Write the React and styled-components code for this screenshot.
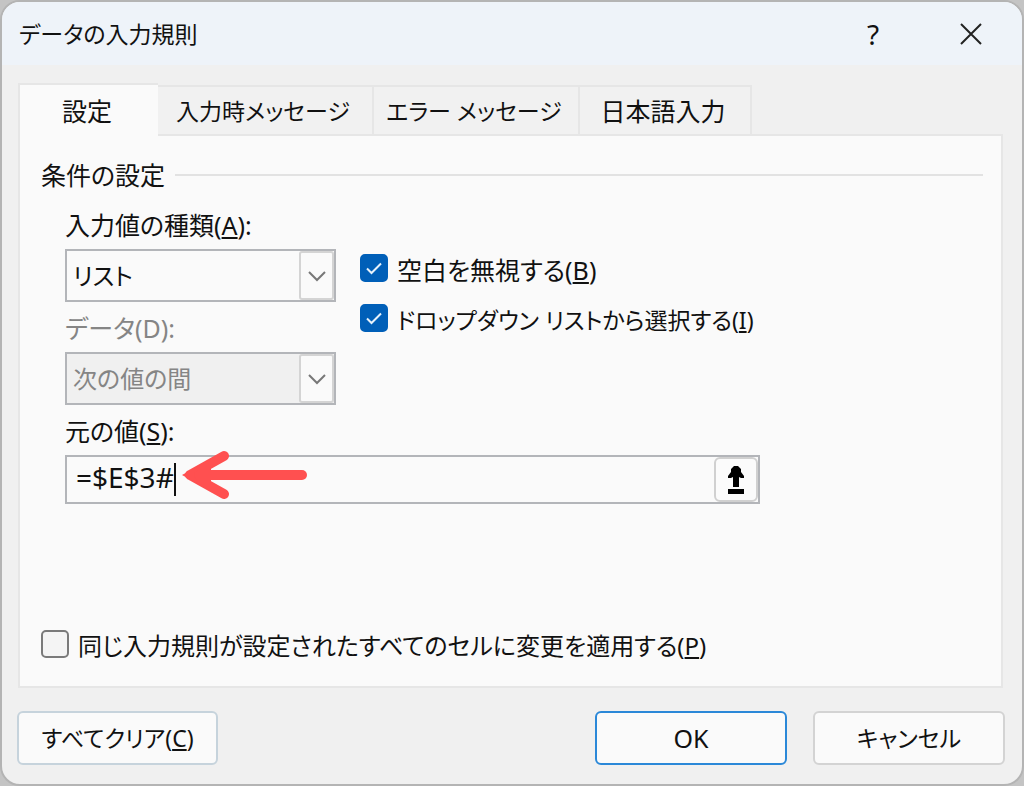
import {useState} from "react";
import styled, {createGlobalStyle} from "styled-components";

const GlobalStyle = createGlobalStyle`
    * {
        box-sizing: border-box;
    }

    body {
        margin: 0;
        background: #c4c4c4;
    }

    body, button, input, select {
        color: #111;
        font-family: "Noto Sans", "Noto Sans CJK JP", sans-serif;
        font-size: 25px;
        line-height: 34px;
        font-feature-settings: "palt";
    }
`

const Dialog = styled.main`
    display: flex;
    flex-direction: column;
    min-height: 100vh;
    border: 2px solid #b4b4b4;
    border-radius: 20px;
    background: #f0f0f0;
    overflow: hidden;
`

const TitleBar = styled.header`
    display: flex;
    align-items: center;
    height: 63px;
    padding: 0 20px 0 17px;
    background: #eef3f9;

    h1 {
        flex: 1;
        margin: 0;
        font-size: 23px;
        font-weight: 400;
    }
`

const TitleButton = styled.button`
    display: flex;
    align-items: center;
    justify-content: center;
    width: 62px;
    height: 44px;
    margin-left: 36px;
    padding: 0;
    border: 0;
    background: transparent;
    font-size: 28px;
`

const TabList = styled.div`
    display: flex;
    align-items: flex-end;
    margin: 18px 18px 0 16px;
`

const Tab = styled.button`
    width: ${({$width}) => $width}px;
    height: ${({$active}) => ($active ? 53 : 49)}px;
    margin-bottom: ${({$active}) => ($active ? -2 : 0)}px;
    padding: 0 4px 0 0;
    border: 2px solid #e6e6e6;
    border-left-width: ${({$active}) => ($active ? 2 : 0)}px;
    border-right-width: ${({$active}) => ($active ? 0 : 2)}px;
    border-bottom: 0;
    background: ${({$active}) => ($active ? "#fafafa" : "#f1f1f1")};
    font-size: ${({$compact}) => ($compact ? 23 : 25)}px;
    z-index: 1;
`

const Panel = styled.section`
    display: flex;
    flex: 1;
    flex-direction: column;
    margin: 0 19px 0 16px;
    padding: 22px 18px 23px 21px;
    border: 2px solid #e6e6e6;
    background: #fafafa;
`

const GroupTitle = styled.h2`
    display: flex;
    align-items: center;
    gap: 10px;
    margin: 0;
    font-size: 25px;
    font-weight: 400;

    &::after {
        flex: 1;
        height: 2px;
        background: #e2e2e2;
        content: "";
    }
`

const Settings = styled.div`
    display: flex;
    gap: 24px;
    padding: 16px 0 0 24px;
`

const Fields = styled.div`
    display: flex;
    flex-direction: column;
    width: 271px;
`

const Label = styled.label`
    height: 34px;
    margin-bottom: 7px;
    color: ${({$disabled}) => ($disabled ? "#858585" : "#111")};
`

const SelectBox = styled.div`
    display: flex;
    height: 53px;
    margin-bottom: 9px;
    border: 2px solid #b3b5b9;
    background: ${({$disabled}) => ($disabled ? "#f0f0f0" : "#fafafa")};

    select {
        flex: 1;
        padding: 0 6px;
        border: 0;
        appearance: none;
        background: transparent;
        font-size: 24px;
        outline: 0;
    }

    select:disabled {
        color: #858585;
        opacity: 1;
    }
`

const DropMark = styled.span`
    display: flex;
    align-items: center;
    justify-content: center;
    width: 35px;
    border: 2px solid #d4d4d4;
    border-radius: 3px;
    background: #fafafa;
`

const Checks = styled.div`
    display: flex;
    flex-direction: column;
    gap: 16px;
    padding-top: 45px;
`

const CheckLabel = styled.label`
    display: flex;
    align-items: center;
    gap: 9px;
    height: 34px;
    font-size: ${({$size}) => $size || 25}px;

    input {
        width: 28px;
        height: 28px;
        margin: 0 0 4px;
        border: 2px solid #7a7a7a;
        border-radius: 5px;
        appearance: none;
        background: #f4f4f4;
    }

    input:checked {
        border-color: #005fb8;
        background: #005fb8 url("data:image/svg+xml,%3Csvg xmlns='http://www.w3.org/2000/svg' viewBox='0 0 20 20'%3E%3Cpath d='M3 10.5l4.5 4.5L17 5.5' fill='none' stroke='%23e8f2fb' stroke-width='2'/%3E%3C/svg%3E") center / 20px no-repeat;
    }
`

const Source = styled.div`
    display: flex;
    flex-direction: column;
    width: 695px;
    max-width: 100%;
    margin-left: 24px;
`

const SourceBox = styled.div`
    position: relative;
    display: flex;
    align-items: center;
    height: 49px;
    padding-left: 9px;
    border: 2px solid #b3b5b9;

    input {
        field-sizing: content;
        padding: 0 0 6px;
        border: 0;
        background: transparent;
        font-size: 28px;
        outline: 0;
    }
`

const Caret = styled.span`
    width: 2px;
    height: 33px;
    background: #111;
`

const Pointer = styled.svg`
    position: absolute;
    top: -7px;
    left: 114px;
`

const PickButton = styled.button`
    display: flex;
    align-items: center;
    justify-content: center;
    width: 44px;
    height: 45px;
    margin-left: auto;
    padding: 0;
    border: 2px solid #d0d0d0;
    border-radius: 6px;
    background: #fbfbfb;
`

const ApplyRow = styled.div`
    margin-top: auto;
`

const Footer = styled.footer`
    display: flex;
    gap: 26px;
    padding: 23px 17px 19px 15px;
`

const Button = styled.button`
    width: ${({$width}) => $width}px;
    height: 54px;
    margin-right: ${({$start}) => ($start ? "auto" : 0)};
    padding: 0;
    border: 2px solid ${({$primary, $start}) => ($primary ? "#2b88d8" : $start ? "#c6d3dc" : "#d3d3d3")};
    border-radius: 6px;
    background: #fafafa;
    font-size: ${({$primary}) => ($primary ? 25 : 23)}px;
`

const tabs = [
    {name: "設定", width: 140},
    {name: "入力時メッセージ", width: 216, compact: true},
    {name: "エラー メッセージ", width: 206, compact: true},
    {name: "日本語入力", width: 172},
]

const Chevron = () => (
    <svg width="18" height="12" viewBox="0 0 18 12" fill="none" stroke="#777" strokeWidth="2">
        <path d="M1 2l8 8 8-8" />
    </svg>
)

const App = () => {
    const [tab, setTab] = useState(0)
    const [formula, setFormula] = useState("=$E$3#")

    return (
        <Dialog>
            <GlobalStyle />
            <TitleBar>
                <h1>データの入力規則</h1>
                <TitleButton aria-label="ヘルプ">?</TitleButton>
                <TitleButton aria-label="閉じる">
                    <svg width="22" height="22" viewBox="0 0 22 22" fill="none" stroke="#222" strokeWidth="2">
                        <path d="M1 1l20 20M21 1L1 21" />
                    </svg>
                </TitleButton>
            </TitleBar>
            <TabList role="tablist">
                {tabs.map(({name, width, compact}, index) => (
                    <Tab
                        key={name}
                        role="tab"
                        aria-selected={tab === index}
                        $active={tab === index}
                        $width={width}
                        $compact={compact}
                        onClick={() => setTab(index)}
                    >
                        {name}
                    </Tab>
                ))}
            </TabList>
            <Panel role="tabpanel">
                <GroupTitle>条件の設定</GroupTitle>
                <Settings>
                    <Fields>
                        <Label htmlFor="kind">入力値の種類(<u>A</u>):</Label>
                        <SelectBox>
                            <select id="kind">
                                <option>リスト</option>
                            </select>
                            <DropMark><Chevron /></DropMark>
                        </SelectBox>
                        <Label htmlFor="operator" $disabled>データ(D):</Label>
                        <SelectBox $disabled>
                            <select id="operator" disabled>
                                <option>次の値の間</option>
                            </select>
                            <DropMark><Chevron /></DropMark>
                        </SelectBox>
                    </Fields>
                    <Checks>
                        <CheckLabel>
                            <input type="checkbox" defaultChecked />
                            <span>空白を無視する(<u>B</u>)</span>
                        </CheckLabel>
                        <CheckLabel $size={23}>
                            <input type="checkbox" defaultChecked />
                            <span>ドロップダウン リストから選択する(<u>I</u>)</span>
                        </CheckLabel>
                    </Checks>
                </Settings>
                <Source>
                    <Label htmlFor="source">元の値(<u>S</u>):</Label>
                    <SourceBox>
                        <input id="source" value={formula} onChange={(e) => setFormula(e.target.value)} />
                        <Caret />
                        <Pointer width="128" height="50" viewBox="0 0 128 50">
                            <path d="M9 25L43 6M9 25l34 19" fill="none" stroke="#ff5050" strokeWidth="10" strokeLinecap="round" />
                            <path d="M1 25L30 9v32z" fill="#ff5050" />
                            <path d="M18 25h103" stroke="#ff5050" strokeWidth="10" strokeLinecap="round" />
                        </Pointer>
                        <PickButton aria-label="セル範囲の選択">
                            <svg width="16" height="28" viewBox="0 0 16 28">
                                <path d="M6 0h4l3 3v3l3 4v2h-3l-2-1v10H5V11l-2 1H0v-2l3-4V3zM0 23h16v5H0z" />
                            </svg>
                        </PickButton>
                    </SourceBox>
                </Source>
                <ApplyRow>
                    <CheckLabel $size={24}>
                        <input type="checkbox" />
                        <span>同じ入力規則が設定されたすべてのセルに変更を適用する(<u>P</u>)</span>
                    </CheckLabel>
                </ApplyRow>
            </Panel>
            <Footer>
                <Button $width={201} $start>すべてクリア(<u>C</u>)</Button>
                <Button $width={192} $primary>OK</Button>
                <Button $width={192}>キャンセル</Button>
            </Footer>
        </Dialog>
    )
}

export default App;
